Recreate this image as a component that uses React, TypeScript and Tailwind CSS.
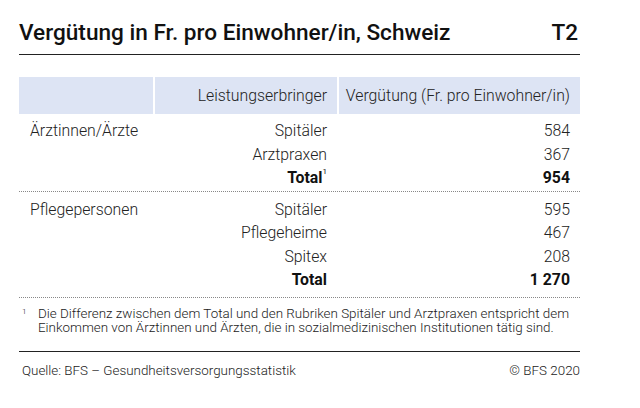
import React from "react";

const rows1 = [
  { a: "Ärztinnen/Ärzte", b: "Spitäler", c: "584" },
  { a: "", b: "Arztpraxen", c: "367" },
];
const rows2 = [
  { a: "Pflegepersonen", b: "Spitäler", c: "595" },
  { a: "", b: "Pflegeheime", c: "467" },
  { a: "", b: "Spitex", c: "208" },
];

function Row({ a, b, c, bold, sup }: { a: string; b: string; c: string; bold?: boolean; sup?: boolean }) {
  return (
    <div className={`flex h-[23.5px] items-center text-[15.8px] leading-[23px] ${bold ? "font-bold text-[#111]" : "font-light text-[#222]"}`}>
      <div className="w-[134px] pl-[11px]">{a}</div>
      <div className="w-[174px] text-right">
        {b}
        {sup && <sup className="text-[8px] font-normal align-[5px]">1</sup>}
      </div>
      <div className="flex-1 pr-[10px] text-right">{c}</div>
    </div>
  );
}

export default function App() {
  return (
    <div className="w-[640px] h-[408px] bg-white pl-[19px] pr-[60px] text-[#222]" style={{ fontFamily: "Roboto, 'Liberation Sans', sans-serif" }}>
      <div className="flex justify-between items-end pt-[20px] pb-[8px] border-b border-[#222]">
        <div className="text-[22.6px] font-medium leading-[26px] text-[#111]">Vergütung in Fr. pro Einwohner/in, Schweiz</div>
        <div className="text-[22.6px] font-medium leading-[26px] text-[#111] pr-[2px]">T2</div>
      </div>
      <div className="mt-[22px] flex h-[37px] gap-[2px] text-[15.8px] font-light text-[#222]">
        <div className="w-[134px] bg-[#dde4f4]"></div>
        <div className="w-[182px] bg-[#dde4f4] flex items-center justify-end pr-[10px]">Leistungserbringer</div>
        <div className="flex-1 bg-[#dde4f4] flex items-center justify-end pr-[10px]">Vergütung (Fr. pro Einwohner/in)</div>
      </div>
      <div className="pt-[5px] pb-[1px] border-b border-dotted border-[#888]">
        {rows1.map((r, i) => (
          <Row key={i} {...r} />
        ))}
        <Row a="" b="Total" c="954" bold sup />
      </div>
      <div className="pt-[6px] pb-[5px] border-b border-dotted border-[#888]">
        {rows2.map((r, i) => (
          <Row key={i} {...r} />
        ))}
        <Row a="" b="Total" c="1 270" bold />
      </div>
      <div className="flex pt-[9px] pb-[15px] text-[13.4px] font-light leading-[14.5px] text-[#222] border-b border-[#222]">
        <div className="w-[19px] pl-[3px] text-[8px] leading-[10px]">1</div>
        <div>
          Die Differenz zwischen dem Total und den Rubriken Spitäler und Arztpraxen entspricht dem
          <br />
          Einkommen von Ärztinnen und Ärzten, die in sozialmedizinischen Institutionen tätig sind.
        </div>
      </div>
      <div className="flex justify-between pt-[9px] pl-[3px] text-[13.4px] font-light text-[#222]">
        <div>Quelle: BFS – Gesundheitsversorgungsstatistik</div>
        <div>© BFS 2020</div>
      </div>
    </div>
  );
}
